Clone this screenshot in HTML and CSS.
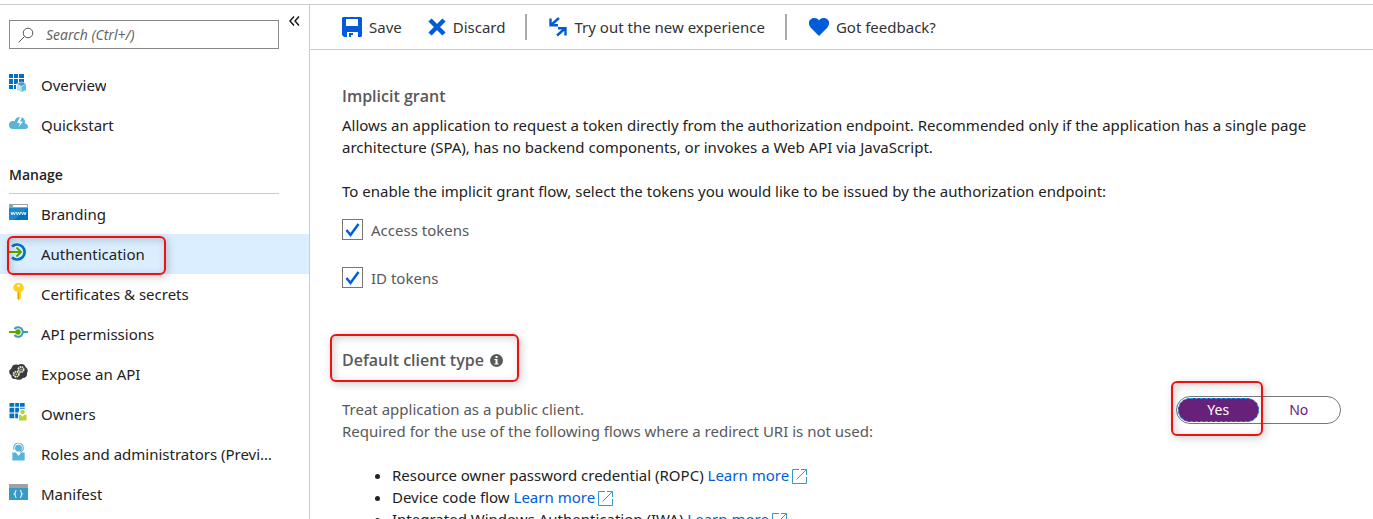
FILE: index.html
```
<!DOCTYPE html>
<html lang="en">
<head>
    <meta charset="UTF-8">
    <meta name="viewport" content="width=device-width, initial-scale=1.0">
    <title>Authentication</title>
    <link rel="stylesheet" href="styles.css">
</head>
<body>
    <div class="blade">
        <aside class="sidebar">
            <div class="search-row">
                <div class="search-box">
                    <svg width="16" height="16" viewBox="0 0 16 16" fill="none" stroke="#555"><circle cx="10" cy="6" r="4.8"/><path d="M6.5 9.5L.5 15.5"/></svg>
                    <input type="text" placeholder="Search (Ctrl+/)" aria-label="Search">
                </div>
                <button class="collapse" aria-label="Collapse menu">
                    <svg width="11" height="10" viewBox="0 0 11 10" fill="none" stroke="#111" stroke-width="1.4"><path d="M5 .5L1 5l4 4.500M10 .5L6 5l4 4.500"/></svg>
                </button>
            </div>
            <nav>
                <a class="item" href="#">
                    <svg class="icon" viewBox="0 0 19 18"><path fill="#0072c6" d="M0 0h4v4H0zM5 0h4v4H5zM10 0h5v4h-5zM0 5h4v5H0zM5 5h4v5H5zM10 5h5v5h-5zM0 11h4v4H0zM5 11h4v4H5z"/><path fill="#fff" d="M12.500 7.500L18 10v6l-5.500 2.500L7 16v-6z"/><path fill="#3e9fc9" d="M12.500 8l4.500 2-4.500 2L8 10z"/><path fill="#b4e2f2" d="M8 10.500l4.500 2V18L8 16z"/><path fill="#68b9d9" d="M17 10.500l-4.500 2V18l4.500-2z"/></svg>
                    <span>Overview</span>
                </a>
                <a class="item" href="#">
                    <svg class="icon" viewBox="0 0 19 18"><path fill="#59b4d9" d="M4 15a4 4 0 0 1 0-8c.6 0 1.200.1 1.500.3C6 4.500 8.500 3 11 3c3 0 5 2.200 5 5l-.2 1.500C18 9.500 19 11 19 12.500 19 14 18 15 16.500 15z"/><path fill="#fff" d="M11 3l-3 6h3l-1.500 4L14 7.500h-3L13 3z"/></svg>
                    <span>Quickstart</span>
                </a>
                <h2>Manage</h2>
                <a class="item" href="#">
                    <svg class="icon" viewBox="0 0 19 18"><path fill="#0072c6" d="M0 1h19v16H0z"/><path fill="#1f87cf" d="M0 5h19L5 17H0z"/><path fill="#a0a1a2" d="M0 1h19v4H0z"/><path fill="#fff" d="M4 2h14v2H4z"/><path fill="#59b4d9" d="M1 2h2v2H1z"/><path fill="none" stroke="#d9ecf8" d="M2 9l1 3 1.200-3 1.200 3 1-3M7.300 9l1 3 1.200-3 1.200 3 1-3M12.600 9l1 3 1.200-3 1.200 3 1-3"/></svg>
                    <span>Branding</span>
                </a>
                <a class="item selected marked" href="#">
                    <svg class="icon" viewBox="0 0 19 18" fill="none"><path stroke="#0072c6" stroke-width="2.600" d="M3 3.500a7.500 7.500 0 1 1 0 11"/><path stroke="#5aa300" stroke-width="2" d="M0 9h11.500M7.500 4.500L12 9l-4.500 4.500"/></svg>
                    <span>Authentication</span>
                </a>
                <a class="item" href="#">
                    <svg class="icon" viewBox="0 0 19 19"><path fill="#fcd116" d="M9.500 0C12.500 0 15 2 15 5c0 2-1 3.500-3 4.500V16l-2.200 2.500L8 16.500V9.500C5.500 8.500 4 7 4 5c0-3 2.500-5 5.500-5z"/><circle cx="9.500" cy="3" r="1.300" fill="#fff"/><path fill="#dba500" d="M9 10h1v7H9z"/></svg>
                    <span>Certificates &amp; secrets</span>
                </a>
                <a class="item" href="#">
                    <svg class="icon" viewBox="0 0 19 18" fill="none"><path stroke="#3999c6" stroke-width="2" d="M5.500 6a4.700 4.700 0 1 1 0 6M14 9h5"/><path stroke="#5aa300" stroke-width="2" d="M0 9h8"/><circle cx="9" cy="9" r="2.700" fill="#5aa300"/></svg>
                    <span>API permissions</span>
                </a>
                <a class="item" href="#">
                    <svg class="icon" viewBox="0 0 19 18"><path fill="#3b3b3b" d="M3 4C4 1.500 7 1 9 2c3-2 7-1 7.500 2 2 1 3 4 1.500 6 .5 3-1.500 5-4 5-2 2-5 2.500-7 1-3 .5-5-1-4.500-3.500C-.5 10.500-.5 7 2 6z"/><g fill="none" stroke="#e8e8e8"><circle cx="7.200" cy="11.200" r="2.600" stroke-width="1.800" stroke-dasharray="1.500 .6"/><circle cx="12" cy="6.500" r="2.600" stroke-width="1.800" stroke-dasharray="1.500 .6"/></g><path fill="#b8d432" d="M6.500 10.500h1.500V12H6.500zM11.300 5.800h1.500v1.500h-1.500z"/></svg>
                    <span>Expose an API</span>
                </a>
                <a class="item" href="#">
                    <svg class="icon" viewBox="0 0 19 19"><path fill="#0072c6" d="M0 0h5v4H0zM6 0h4v4H6zM11 0h5v4h-5zM0 5h5v5H0zM6 5h4v5H6zM11 5h5v5h-5zM0 11h5v5H0zM6 11h4v5H6z"/><path fill="#fff" d="M9 11l2-5h5l2 5v7H9z"/><circle cx="13.800" cy="9.500" r="2.300" fill="#b8d432"/><path fill="#b8d432" d="M10 12.500h2l1.800 2 1.800-2H18V18.500h-8z"/></svg>
                    <span>Owners</span>
                </a>
                <a class="item" href="#">
                    <svg class="icon" viewBox="0 0 19 19"><circle cx="9.500" cy="5.500" r="3.600" fill="#59b4d9"/><path fill="none" stroke="#59b4d9" stroke-width="1.200" d="M4.500 7V5a5 5 0 0 1 10 0v2l-3 3"/><path fill="#59b4d9" d="M3 10h3.500l3 3.500 3-3.500H16v8.500H3z"/></svg>
                    <span>Roles and administrators (Preview)</span>
                </a>
                <a class="item" href="#">
                    <svg class="icon" viewBox="0 0 19 18"><path fill="#3999c6" d="M0 1h19v16H0z"/><path fill="#a0a1a2" d="M0 1h19v4H0z"/><path fill="none" stroke="#fff" stroke-width="1.100" d="M7.500 7.500c-2 0-.5 3-2 3.500 1.500.5 0 3.500 2 3.500M11 7.500c2 0 .5 3 2 3.500-1.500.5 0 3.500-2 3.500"/></svg>
                    <span>Manifest</span>
                </a>
            </nav>
        </aside>
        <main>
            <div class="toolbar">
                <button class="command">
                    <svg width="20" height="20" viewBox="0 0 20 20"><path fill="#015cda" fill-rule="evenodd" d="M1 0h18l1 1v18l-1 1h-3v-5H5v5H2l-2-2V1zM4 2v7h12V2zM7 16h4v2H9v2H7z"/></svg>
                    Save
                </button>
                <button class="command discard">
                    <svg width="18" height="18" viewBox="0 0 18 18"><path fill="none" stroke="#015cda" stroke-width="4.500" d="M2 2l14 14M16 2L2 16"/></svg>
                    Discard
                </button>
                <span class="divider"></span>
                <button class="command">
                    <svg width="18" height="20" viewBox="0 0 18 20" fill="none" stroke="#015cda" stroke-width="2.400"><path d="M10 1L2 8M1.500 1.500v6.800H9M8 18.500l8-7M9 11.200h7.500v7.300"/></svg>
                    Try out the new experience
                </button>
                <span class="divider"></span>
                <button class="command">
                    <svg width="20" height="18" viewBox="0 0 20 18"><path fill="#015cda" d="M10 18L2 10C-1 6.500-.5 3 1.500 1.500 4-.5 8-.5 10 2.500 12-.5 16-.5 18.500 1.500 20.500 3 21 6.500 18 10z"/></svg>
                    Got feedback?
                </button>
            </div>
            <div class="content">
                <h3>Implicit grant</h3>
                <p>Allows an application to request a token directly from the authorization endpoint. Recommended only if the application has a single page architecture (SPA), has no backend components, or invokes a Web API via JavaScript.</p>
                <p>To enable the implicit grant flow, select the tokens you would like to be issued by the authorization endpoint:</p>
                <div class="checks">
                    <label><input type="checkbox" checked> Access tokens</label>
                    <label><input type="checkbox" checked> ID tokens</label>
                </div>
                <h3 class="client-title marked">
                    Default client type
                    <svg width="13" height="13" viewBox="0 0 13 13"><circle cx="6.500" cy="6.500" r="6.500" fill="#595959"/><path fill="#fff" d="M5.500 2h2v2h-2zM4.500 5h3v4.500h1v1h-4v-1h1V6h-1z"/></svg>
                </h3>
                <div class="client-row">
                    <p>Treat application as a public client.<br>Required for the use of the following flows where a redirect URI is not used:</p>
                    <div class="toggle">
                        <span class="choice marked"><button class="on" aria-pressed="true">Yes</button></span>
                        <span class="choice"><button aria-pressed="false">No</button></span>
                    </div>
                </div>
                <ul>
                    <li>Resource owner password credential (ROPC) <a href="#">Learn more<svg width="15" height="15" viewBox="0 0 15 15"><path d="M7 .5H.5v14h14V8M9 .5h5.500V6M14 1L4.500 10.500"/></svg></a></li>
                    <li>Device code flow <a href="#">Learn more<svg width="15" height="15" viewBox="0 0 15 15"><path d="M7 .5H.5v14h14V8M9 .5h5.500V6M14 1L4.500 10.500"/></svg></a></li>
                    <li>Integrated Windows Authentication (IWA) <a href="#">Learn more<svg width="15" height="15" viewBox="0 0 15 15"><path d="M7 .5H.5v14h14V8M9 .5h5.500V6M14 1L4.500 10.500"/></svg></a></li>
                </ul>
            </div>
        </main>
    </div>
</body>
</html>
```
FILE: styles.css
```
*, *::after {
    box-sizing: border-box;
}
body {
    margin: 0;
    padding-top: 4px;
    height: 100vh;
    overflow: hidden;
    background: #fff;
    color: #222;
    font-family: "Noto Sans", "Open Sans", sans-serif;
    font-size: 15px;
    line-height: 22px;
}
button, input {
    font: inherit;
    color: inherit;
}
button {
    border: none;
    background: none;
    padding: 0;
    cursor: pointer;
}
.blade {
    display: flex;
    height: 100%;
    border-top: 1px solid #ccc;
}

/* left menu */
.sidebar {
    flex: 0 0 310px;
    overflow: hidden;
    border-right: 1px solid #ccc;
}
.search-row {
    display: flex;
    align-items: flex-start;
    gap: 10px;
    padding: 15px 9px 16px;
}
.search-box {
    flex: 1;
    display: flex;
    align-items: center;
    gap: 12px;
    height: 29px;
    padding: 0 8px;
    border: 1px solid #888;
}
.search-box input {
    flex: 1;
    min-width: 0;
    padding: 0;
    border: none;
    outline: none;
    font-size: 14px;
}
.search-box input::placeholder {
    color: #666;
    font-style: italic;
}
.collapse {
    line-height: 0;
    margin-top: -4px;
}
.item {
    display: flex;
    align-items: center;
    gap: 13px;
    height: 40px;
    padding: 0 34px 0 9px;
    color: #222;
    text-decoration: none;
}
.item span {
    overflow: hidden;
    white-space: nowrap;
    text-overflow: ellipsis;
}
.icon {
    flex: none;
    width: 19px;
    height: 18px;
    margin-bottom: 4px;
}
.selected {
    background: #dbeeff;
}
.sidebar h2 {
    margin: 16px 30px 0 9px;
    padding: 3px 0 7px;
    border-bottom: 1px solid #ccc;
    font-family: "Open Sans", sans-serif;
    font-size: 14px;
    font-weight: 600;
}

/* red callouts drawn over the highlighted parts */
.marked {
    position: relative;
}
.marked::after {
    content: "";
    position: absolute;
    border: 2px solid #ee1111;
    border-radius: 6px;
    box-shadow: 2px 2px 8px rgba(0, 0, 0, 0.2), inset 2px 2px 8px rgba(0, 0, 0, 0.18);
    pointer-events: none;
}
.item.marked::after {
    left: 7px;
    top: 2px;
    width: 159px;
    height: 39px;
}
.client-title.marked::after {
    inset: -14px -16px -10px -12px;
}
.choice.marked::after {
    inset: -17px -4px -14px -7px;
}

/* command bar */
main {
    flex: 1;
    min-width: 0;
    overflow: hidden;
}
.toolbar {
    display: flex;
    align-items: center;
    height: 45px;
    padding-left: 32px;
    border-bottom: 1px solid #ccc;
}
.command {
    display: flex;
    align-items: center;
    gap: 7px;
    color: #333;
    white-space: nowrap;
}
.discard {
    margin-left: 26px;
}
.divider {
    width: 2px;
    height: 26px;
    margin: 0 22px 0 20px;
    background: #aaa;
}

/* settings */
.content {
    padding: 34px 32px 0;
}
h3 {
    margin: 0 0 6px;
    color: #595959;
    font-family: "Open Sans", sans-serif;
    font-size: 16px;
    font-weight: 600;
    line-height: 24px;
}
.content p {
    margin: 0 0 22px;
}
.checks {
    display: flex;
    flex-direction: column;
    align-items: flex-start;
    gap: 27px;
    margin: -5px 0 60px;
}
.checks label {
    display: flex;
    align-items: center;
    gap: 8px;
    height: 21px;
    color: #595959;
}
.checks input {
    appearance: none;
    width: 21px;
    height: 21px;
    margin: 0;
    border: 1px solid #777;
    background: url("data:image/svg+xml,%3Csvg xmlns='http://www.w3.org/2000/svg' viewBox='0 0 19 19'%3E%3Cpath d='M3.500 10l4 5 8-11' fill='none' stroke='%23015cda' stroke-width='2.500'/%3E%3C/svg%3E") no-repeat center;
}
.checks input:not(:checked) {
    background: none;
}
.client-title {
    display: inline-flex;
    align-items: center;
    gap: 6px;
    margin-bottom: 24px;
}
.client-row {
    display: flex;
    justify-content: space-between;
    align-items: flex-start;
    color: #595959;
}
.client-row p {
    padding-top: 2px;
}
.toggle {
    display: flex;
    width: 165px;
    height: 28px;
    padding: 1px;
    border: 1px solid #777;
    border-radius: 14px;
}
.choice {
    display: flex;
    flex: 1;
}
.choice button {
    flex: 1;
    border-radius: 12px;
    color: #68217a;
    font-size: 14px;
}
.choice .on {
    border: 1px dashed #00abec;
    background: #68217a;
    color: #fff;
}
.content ul {
    margin: 0;
    padding-left: 50px;
}
.content a {
    color: #015cda;
    text-decoration: none;
}
.content li svg {
    margin-left: 3px;
    vertical-align: -3px;
    fill: none;
    stroke: #3999c6;
}
```
